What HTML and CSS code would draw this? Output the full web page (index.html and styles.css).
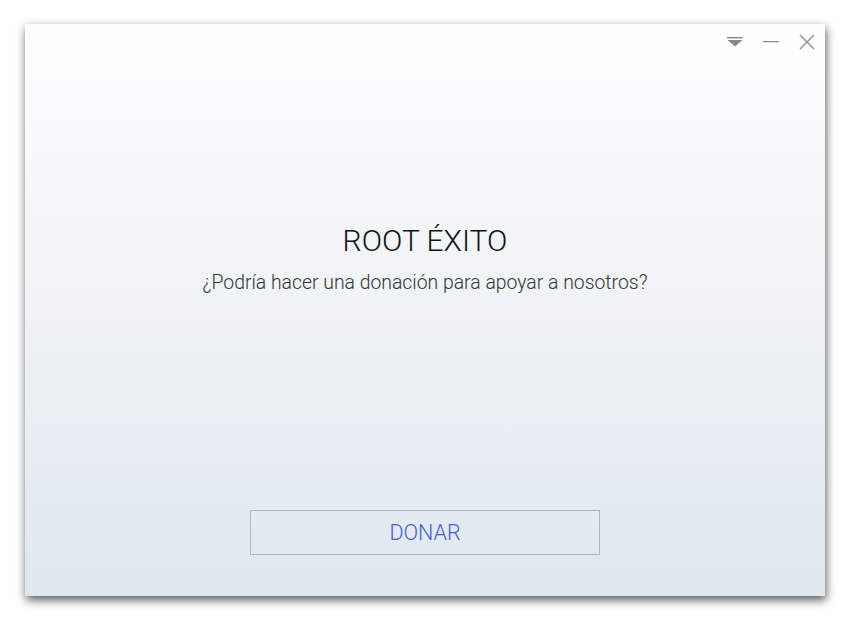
FILE: index.html
```html
<!DOCTYPE html>
<html lang="es">
<head>
    <meta charset="UTF-8">
    <title>Root Éxito</title>
    <link rel="stylesheet" href="styles.css">
</head>
<body>
    <div class="window">
        <div class="titlebar">
            <button class="ctrl" title="Menú">
                <svg width="16" height="12" viewBox="0 0 16 12">
                    <rect x="0" y="1" width="16" height="1.4" fill="#888"/>
                    <polygon points="0.5,4 15.5,4 8,10.5" fill="#888"/>
                </svg>
            </button>
            <button class="ctrl" title="Minimizar">
                <svg width="16" height="12" viewBox="0 0 16 12">
                    <rect x="0" y="5" width="16" height="1.2" fill="#888"/>
                </svg>
            </button>
            <button class="ctrl" title="Cerrar">
                <svg width="16" height="16" viewBox="0 0 16 16">
                    <path d="M1 1 L15 15 M15 1 L1 15" stroke="#888" stroke-width="1.2" fill="none"/>
                </svg>
            </button>
        </div>

        <div class="content">
            <h1 class="title">ROOT ÉXITO</h1>
            <p class="subtitle">¿Podría hacer una donación para apoyar a nosotros?</p>
        </div>

        <div class="footer">
            <button class="donate-btn">DONAR</button>
        </div>
    </div>
</body>
</html>
```

FILE: styles.css
```css
body {
    margin: 0;
    padding-bottom: 24px;
    background: #fff;
    font-family: Roboto, "Liberation Sans", sans-serif;
}

.window {
    width: 800px;
    height: 572px;
    margin: 24px 0 0 25px;
    display: flex;
    flex-direction: column;
    background: linear-gradient(#fdfeff 0%, #f2f5f8 40%, #dfe7ef 100%);
    box-shadow: 1px 4px 9px rgba(0, 0, 0, 0.65);
}

.titlebar {
    height: 36px;
    display: flex;
    justify-content: flex-end;
    align-items: center;
    gap: 20px;
    padding: 0 10px 0 0;
}

.ctrl {
    background: none;
    border: 0;
    padding: 0;
    width: 16px;
    height: 16px;
    display: flex;
    align-items: center;
    justify-content: center;
    cursor: pointer;
}

.content {
    margin-top: 163px;
    text-align: center;
}

.title {
    margin: 0;
    font-size: 30px;
    font-weight: 300;
    line-height: 36px;
    color: #111;
}

.subtitle {
    margin: 12px 0 0;
    font-size: 19.4px;
    font-weight: 300;
    color: #333;
    line-height: 24px;
}

.footer {
    margin-top: auto;
    padding-bottom: 41px;
    display: flex;
    justify-content: center;
}

.donate-btn {
    width: 350px;
    height: 45px;
    background: transparent;
    border: 1px solid #b5b5b5;
    font-family: Roboto, "Liberation Sans", sans-serif;
    font-weight: 300;
    font-size: 21.5px;
    color: #4460d6;
    cursor: pointer;
}
```
